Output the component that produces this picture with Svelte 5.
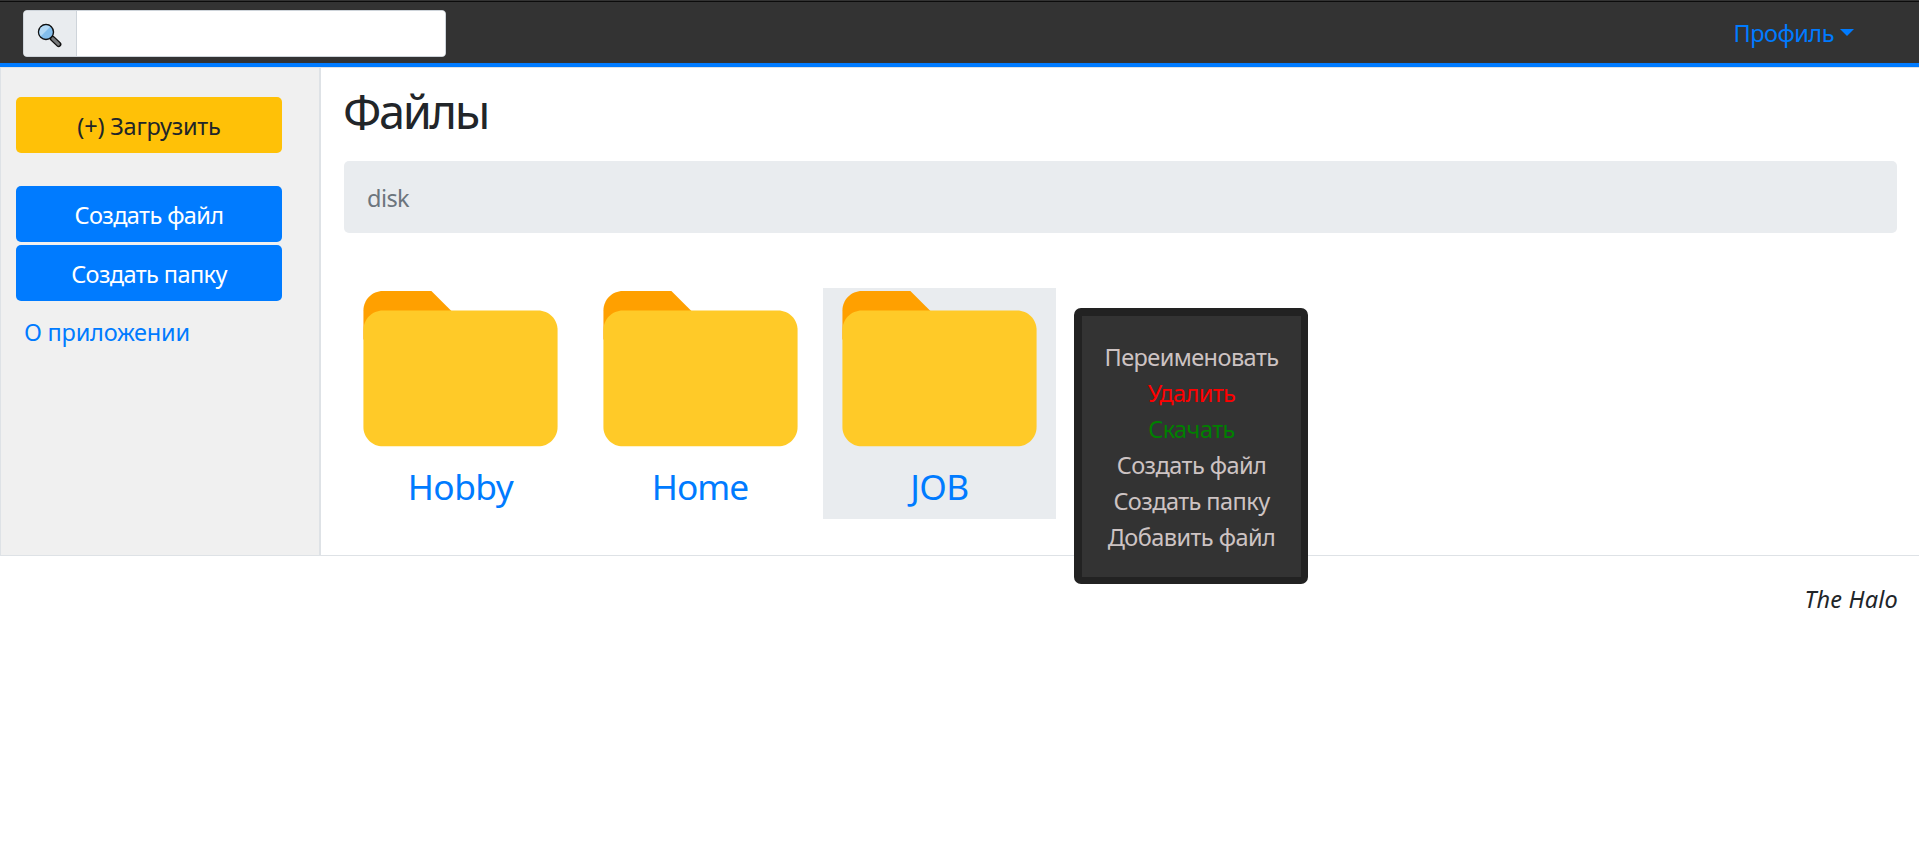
<script>
  const folders = [
    { name: 'Hobby', fit: 'f4' },
    { name: 'Home', fit: 'f9' },
    { name: 'JOB', fit: 'f4', active: true }
  ];
  const menu = [
    { label: 'Переименовать', kind: '' },
    { label: 'Удалить', kind: 'danger' },
    { label: 'Скачать', kind: 'success' },
    { label: 'Создать файл', kind: '' },
    { label: 'Создать папку', kind: '' },
    { label: 'Добавить файл', kind: '' }
  ];
</script>

<header>
  <div class="search">
    <span class="addon">
      <svg width="26" height="26" viewBox="0 0 26 26" aria-hidden="true">
        <path d="M15.5 15.5 L21.6 21.3" stroke="#111" stroke-width="5.6" stroke-linecap="round" />
        <path d="M15.7 15.7 L21.4 21.1" stroke="#77797b" stroke-width="3" stroke-linecap="round" />
        <circle cx="9" cy="9" r="7.5" fill="#83beec" stroke="#111" stroke-width="1.4" />
        <path d="M3.8 13.2 A6.7 6.7 0 0 1 13.2 3.8 Z" fill="#b3d9f5" />
      </svg>
    </span>
    <input type="text" aria-label="search" />
  </div>
  <a class="profile" href="#profile">Профиль<i class="caret"></i></a>
</header>

<div class="layout">
  <aside>
    <button class="btn upload">(+) Загрузить</button>
    <button class="btn">Создать файл</button>
    <button class="btn">Создать папку</button>
    <a class="about" href="#about">О приложении</a>
  </aside>
  <main>
    <h2>Файлы</h2>
    <div class="crumbs">disk</div>
    <div class="cards">
      {#each folders as f}
        <div class="card" class:active={f.active}>
          <svg width="233" height="177" viewBox="0 7.38 48 36.46" aria-hidden="true">
            <path fill="#FFA000" d="M26 16L18 8H8c-2.2 0-4 1.8-4 4v6h22z" />
            <path fill="#FFCA28" d="M40 12H8c-2.2 0-4 1.8-4 4v20c0 2.2 1.8 4 4 4h32c2.2 0 4-1.8 4-4V16c0-2.2-1.8-4-4-4z" />
          </svg>
          <a class={f.fit} href="#{f.name}">{f.name}</a>
        </div>
      {/each}
    </div>
  </main>
</div>

<footer>The Halo</footer>

<div class="menu">
  {#each menu as m}
    <div class={m.kind}>{m.label}</div>
  {/each}
</div>

<style>
  :global(body) {
    background: #fff;
    color: #212529;
    font: 23.52px/36px "Segoe UI", "Noto Sans", sans-serif;
    letter-spacing: -0.56px;
  }
  :global(*) { box-sizing: border-box; }
  a { color: #007bff; text-decoration: none; }
  header {
    height: 67px;
    padding: 9px 65px 0 23px;
    display: flex;
    justify-content: space-between;
    align-items: flex-start;
    background: linear-gradient(#333 1px, #0c0c0c 1px, #0c0c0c 2px, #333 2px);
    border-bottom: 4px solid #007bff;
  }
  .search {
    display: flex;
    width: 423px;
    height: 47px;
    margin-top: 1px;
    border: 1px solid #ced4da;
    border-radius: 4px;
    background: #fff;
    overflow: hidden;
  }
  .addon {
    width: 53px;
    padding: 12px 0 0 13px;
    flex: none;
    background: #e9ecef;
    border-right: 1px solid #ced4da;
  }
  .addon svg { display: block; fill: none; }
  input { flex: 1; min-width: 0; border: 0; outline: 0; background: #fff; }
  .profile { display: flex; padding-top: 6px; letter-spacing: -0.5px; }
  .caret {
    margin: 14px 0 0 6px;
    height: 7px;
    border-top: 7px solid #007bff;
    border-left: 7px solid transparent;
    border-right: 7px solid transparent;
  }
  .layout {
    display: flex;
    height: 489px;
    border: 1px solid #dee2e6;
    border-right: 0;
  }
  aside {
    width: 320px;
    flex: none;
    padding: 29px 0 0 15px;
    background: #f0f0f0;
    border-right: 2px solid #dee2e6;
  }
  .btn {
    display: block;
    width: 266px;
    height: 56px;
    margin: 0 0 3px;
    padding: 1px 0 0;
    border: 0;
    border-radius: 5px;
    background: #007bff;
    color: #fff;
    font: inherit;
    letter-spacing: -0.6px;
  }
  .upload { margin-bottom: 33px; background: #ffc107; color: #212529; letter-spacing: -0.2px; }
  .about { display: block; padding: 10px 0 0 8px; letter-spacing: -0.22px; }
  main { flex: 1; min-width: 0; padding: 14px 22px 0 23px; }
  h2 {
    height: 58px;
    margin: 0 0 21px -1px;
    font-size: 47px;
    font-weight: 400;
    line-height: 58px;
    letter-spacing: -2.4px;
  }
  .crumbs {
    height: 72px;
    padding: 19px 23px;
    border-radius: 5px;
    background: #e9ecef;
    color: #6c757d;
  }
  .cards { display: flex; gap: 6.5px; margin-top: 55px; }
  .card { width: 233px; height: 231px; text-align: center; }
  .card svg { display: block; }
  .card a { display: block; font-size: 35.3px; line-height: 43px; }
  .f4 { letter-spacing: -0.5px; }
  .f9 { letter-spacing: -1px; }
  .active { background: #e9ecef; }
  footer {
    padding: 25px 21px 0 0;
    text-align: right;
    font-style: italic;
    letter-spacing: 0.2px;
  }
  .menu {
    position: absolute;
    left: 1074px;
    top: 308px;
    width: 234px;
    height: 276px;
    padding-top: 23px;
    border: solid #222;
    border-width: 8px 7px 7px 8px;
    border-radius: 7px;
    background: #333;
    color: #cdc3c3;
    text-align: center;
  }
  .danger { color: #f00; }
  .success { color: #008000; }
</style>
